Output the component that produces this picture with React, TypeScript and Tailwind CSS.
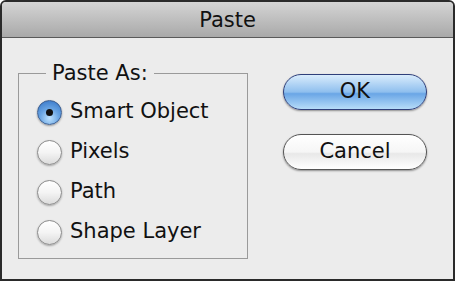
const font = "font-['DejaVu_Sans',sans-serif]";

function Radio({ label, checked }: { label: string; checked?: boolean }) {
  return (
    <div className="flex items-center h-[40px]">
      {checked ? (
        <span className="w-[25px] h-[25px] rounded-full border border-[#3d5e8f] bg-[radial-gradient(circle_at_50%_75%,#bfe3ff_0%,#6aa5e3_45%,#2f6fc4_100%)] shadow-[0_1px_2px_rgba(0,0,0,0.35)] flex items-center justify-center">
          <span className="w-[7px] h-[7px] rounded-full bg-[#111]" />
        </span>
      ) : (
        <span className="w-[25px] h-[25px] rounded-full border border-[#8a8a8a] bg-[linear-gradient(#ffffff,#f4f4f4_50%,#dcdcdc)] shadow-[0_1px_2px_rgba(0,0,0,0.3)]" />
      )}
      <span className="ml-[8px] text-[21px] text-[#111]">{label}</span>
    </div>
  );
}

export default function App() {
  return (
    <div className={`w-[455px] h-[281px] ${font} bg-[#ececec] border-[2px] border-[#2a2a2a] rounded-t-[6px] overflow-hidden flex flex-col`}>
      <div className="h-[36px] shrink-0 bg-[linear-gradient(#d4d4d4,#a9a9a9)] border-b border-[#5a5a5a] flex items-center justify-center">
        <span className="text-[21px] text-[#111] mt-[3px]">Paste</span>
      </div>
      <div className="flex flex-1 pl-[16px] pt-[24px]">
        <fieldset className="w-[230px] h-[197px] border border-[#9a9a9a] pl-[18px] pt-[5px] m-0">
          <legend className="ml-[9px] px-[6px] text-[21px] text-[#111] leading-[22px]">Paste As:</legend>
          <div className="flex flex-col mt-[3px]">
            <Radio label="Smart Object" checked />
            <Radio label="Pixels" />
            <Radio label="Path" />
            <Radio label="Shape Layer" />
          </div>
        </fieldset>
        <div className="flex flex-col ml-[35px] pt-[12px] gap-[24px]">
          <button className="w-[144px] h-[36px] rounded-full border border-[#2f3f7a] bg-[linear-gradient(#d9ecfc,#8fbfee_50%,#6aa6e6_55%,#b7dcf8)] shadow-[0_1px_2px_rgba(0,0,0,0.4)] text-[21px] text-[#111]">
            OK
          </button>
          <button className="w-[144px] h-[36px] rounded-full border border-[#555] bg-[linear-gradient(#ffffff,#f6f6f6_50%,#e8e8e8_55%,#ffffff)] shadow-[0_1px_2px_rgba(0,0,0,0.4)] text-[21px] text-[#111]">
            Cancel
          </button>
        </div>
      </div>
    </div>
  );
}
